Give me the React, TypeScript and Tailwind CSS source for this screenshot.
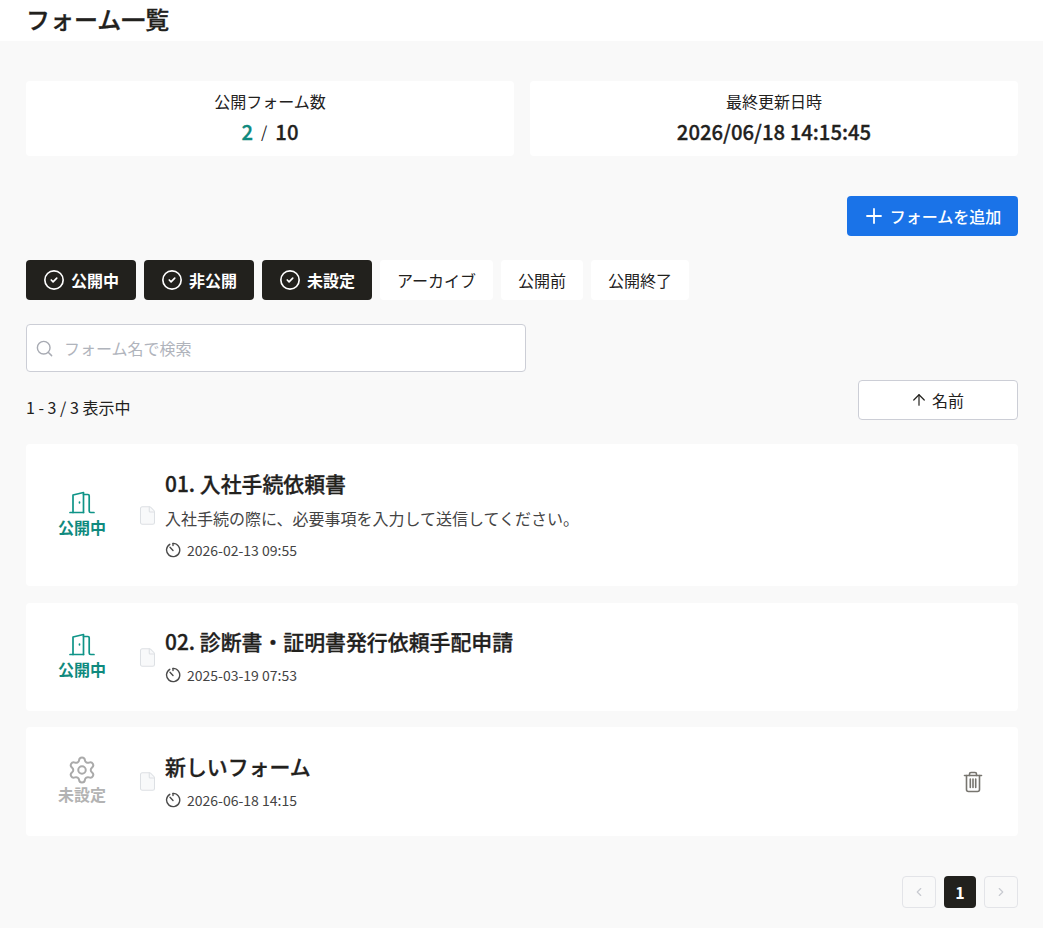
import React from 'react';
import { ArrowUp, ChevronLeft, ChevronRight, CircleCheck, File, Plus, Search, Settings } from 'lucide-react';

const DoorIcon = () => (
  <svg width="26" height="24" viewBox="0 0 26 24" fill="none" stroke="#0f9488" strokeWidth="1.7" strokeLinecap="round" strokeLinejoin="round">
    <path d="M1 21.500h13.500" />
    <path d="M4 21.500V4L14.500 1.500v20" />
    <path d="M14.500 3.500H19c.8 0 1.200.5 1.200 1.200V20c0 1 .6 1.500 1.500 1.500H25" />
    <path d="M10.500 11v.8" />
  </svg>
);

const ClockIcon = () => (
  <svg width="16" height="16" viewBox="0 0 16 16" fill="none" stroke="#4a4a4a" strokeWidth="1.400" strokeLinecap="round" strokeLinejoin="round" className="shrink-0">
    <path d="M4.800 2.300A6.600 6.600 0 1 0 8 1.400" />
    <path d="M8 1.400v2.200M8 8.400 5 5.200" />
  </svg>
);

const TrashIcon = () => (
  <svg width="20" height="22" viewBox="0 0 20 22" fill="none" stroke="#77756f" strokeWidth="1.6" strokeLinecap="round" strokeLinejoin="round">
    <path d="M1.500 4.500h17" />
    <path d="M6.500 4.500V3c0-1 .6-1.500 1.500-1.500h4c1 0 1.500.5 1.500 1.500v1.500" />
    <path d="M3.500 4.500v14c0 1.200.8 2 2 2h9c1.200 0 2-.8 2-2v-14" />
    <path d="M7.300 8v8.500M10 8v8.500M12.700 8v8.500" />
  </svg>
);

const filters = [
  { label: '公開中', active: true },
  { label: '非公開', active: true },
  { label: '未設定', active: true },
  { label: 'アーカイブ', active: false },
  { label: '公開前', active: false },
  { label: '公開終了', active: false },
];

const forms = [
  { title: '01. 入社手続依頼書', desc: '入社手続の際に、必要事項を入力して送信してください。', date: '2026-02-13 09:55', status: 'open', h: 'h-[142px] mb-[17px]' },
  { title: '02. 診断書・証明書発行依頼手配申請', desc: '', date: '2025-03-19 07:53', status: 'open', h: 'h-[108px] mb-4' },
  { title: '新しいフォーム', desc: '', date: '2026-06-18 14:15', status: 'unset', h: 'h-[109px]' },
];

export default function App() {
  return (
    <div className="min-h-[928px] bg-[#f9f9f9] text-[#22211d] font-['Noto_Sans_CJK_JP','Noto_Sans',sans-serif]">
      <header className="h-[41px] bg-white pl-[26px] flex items-center">
        <h1 className="text-2xl font-medium [-webkit-text-stroke:0.3px_currentColor] leading-none -mt-[4px]">フォーム一覧</h1>
      </header>

      <main className="pl-[26px] pr-[25px] pt-10">
        <div className="grid grid-cols-2 gap-4">
          <div className="h-[75px] bg-white rounded flex flex-col items-center pt-2">
            <div className="text-base leading-6">公開フォーム数</div>
            <div className="flex items-center gap-2 text-[20.3px] font-medium [-webkit-text-stroke:0.3px_currentColor] leading-7 mt-[4px]">
              <span className="text-[#0f8a7e]">2</span>
              <span className="text-base font-normal [-webkit-text-stroke:0]">/</span>
              <span>10</span>
            </div>
          </div>
          <div className="h-[75px] bg-white rounded flex flex-col items-center pt-2">
            <div className="text-base leading-6">最終更新日時</div>
            <div className="text-[20.3px] font-medium [-webkit-text-stroke:0.3px_currentColor] leading-7 mt-[4px]">2026/06/18 14:15:45</div>
          </div>
        </div>

        <div className="flex justify-end mt-10">
          <button className="w-[171px] h-10 pr-[2px] bg-[#1a73e8] text-white rounded flex items-center justify-center gap-1 text-base font-medium">
            <Plus size={24} strokeWidth={1.8} />
            フォームを追加
          </button>
        </div>

        <div className="flex gap-2 mt-6">
          {filters.map(f =>
            f.active ? (
              <button key={f.label} className="h-10 w-[110px] bg-[#22211d] text-white rounded flex items-center justify-center gap-[6px] text-base font-bold">
                <CircleCheck size={22} strokeWidth={1.8} />
                {f.label}
              </button>
            ) : (
              <button key={f.label} className="h-10 px-[17px] bg-white rounded text-base">
                {f.label}
              </button>
            )
          )}
        </div>

        <div className="w-[500px] h-12 mt-6 bg-white border border-[#ccced6] rounded flex items-center pl-2 gap-[10px]">
          <Search size={19} strokeWidth={1.8} className="text-[#a8abb3]" />
          <span className="text-base text-[#b0b4bc]">フォーム名で検索</span>
        </div>

        <div className="flex justify-between mt-2 h-10 mb-6">
          <span className="text-base leading-6 mt-[15px]">1 - 3 / 3 表示中</span>
          <button className="w-40 h-10 pr-[2px] bg-white border border-[#ccced6] rounded flex items-center justify-center gap-1 text-base">
            <ArrowUp size={18} strokeWidth={1.6} />
            名前
          </button>
        </div>

        <div>
          {forms.map(form => (
            <div key={form.title} className={`${form.h} bg-white rounded flex items-center`}>
              <div className="w-[112px] shrink-0 flex flex-col items-center">
                {form.status === 'open' ? <DoorIcon /> : <Settings size={30} strokeWidth={1.6} className="text-[#aaa] -mt-[2px] -mb-[3px]" />}
                <span className={`text-base font-bold leading-6 ${form.status === 'open' ? 'text-[#0f8a7e]' : 'text-[#b3b3b3]'}`}>
                  {form.status === 'open' ? '公開中' : '未設定'}
                </span>
              </div>
              <File size={21} strokeWidth={1.2} className="text-[#dde0e4] fill-[#f8f9fa] shrink-0 -ml-[1px] mr-[7px]" />
              <div className="flex-1 min-w-0 pb-[2px]">
                <div className="text-[20.9px] font-medium [-webkit-text-stroke:0.3px_currentColor] leading-7">{form.title}</div>
                {form.desc && <div className="text-base leading-6 text-[#444] mt-[9px]">{form.desc}</div>}
                <div className="flex items-center gap-[6px] text-sm leading-5 text-[#444] mt-[10px]">
                  <ClockIcon />
                  {form.date}
                </div>
              </div>
              {form.status === 'unset' && (
                <div className="mr-[35px]">
                  <TrashIcon />
                </div>
              )}
            </div>
          ))}
        </div>

        <div className="flex justify-end gap-2 mt-10">
          <button className="w-[34px] h-8 border border-[#e3e4e8] rounded flex items-center justify-center text-[#c8cad0]">
            <ChevronLeft size={14} />
          </button>
          <button className="w-8 h-8 bg-[#22211d] text-white rounded text-base font-bold">1</button>
          <button className="w-[34px] h-8 border border-[#e3e4e8] rounded flex items-center justify-center text-[#c8cad0]">
            <ChevronRight size={14} />
          </button>
        </div>
      </main>
    </div>
  );
}
